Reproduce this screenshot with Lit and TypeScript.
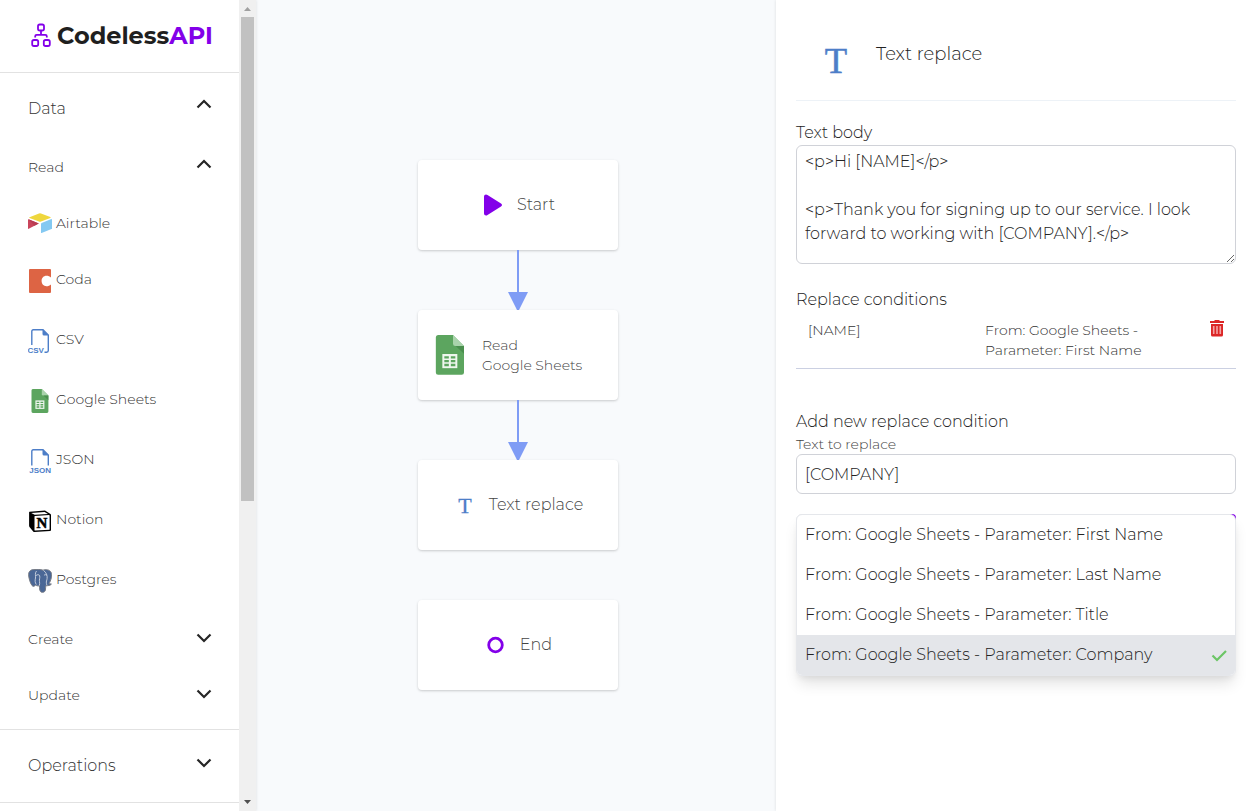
import { LitElement, html, svg, css, nothing } from "lit";
import { customElement, property, state } from "lit/decorators.js";
import { classMap } from "lit/directives/class-map.js";

const sheetsIcon = html`<svg class="glyph" viewBox="0 0 24 24" aria-hidden="true">
  <path d="M4.800 0h9l6.600 6.600v15.900a1.400 1.400 0 0 1-1.400 1.400H4.900a1.400 1.400 0 0 1-1.400-1.400V1.400A1.400 1.400 0 0 1 4.800 0z" fill="#5ca55f" />
  <path d="M13.800 0l6.600 6.600h-5.200a1.400 1.400 0 0 1-1.400-1.400z" fill="#a9d3ab" />
  <path d="M15.400 6.600h5v4.600z" fill="#4a8f4e" />
  <path d="M7.400 11.400h9v8.500h-9z" fill="#eef6ee" />
  <path d="M8.600 12.700h2.700v1.400H8.600zM12.500 12.700h2.700v1.400h-2.700zM8.600 15h2.700v1.400H8.600zM12.500 15h2.700v1.400h-2.700zM8.600 17.300h2.700v1.400H8.600zM12.500 17.300h2.700v1.400h-2.700z" fill="#5ca55f" />
</svg>`;

const textIcon = html`<svg class="glyph" viewBox="0 0 24 24" aria-hidden="true">
  <text x="12" y="19.500" text-anchor="middle" font-family="Liberation Serif, serif" font-size="22" stroke="#4d7ec8" stroke-width=".3" fill="#4d7ec8">T</text>
</svg>`;

const fileIcon = (name: string) => html`<svg class="glyph" viewBox="0 0 24 24" aria-hidden="true">
  ${name === "CSV"
    ? svg`<path d="M3.800 16V2.300Q3.800.8 5.300.8H15L20.300 6V21.500Q20.300 23.200 18.600 23.200H16.500" fill="none" stroke="#4d7ec8" stroke-width="1.400" />
        <text x="-0.500" y="23.500" font-family="Liberation Sans, sans-serif" font-weight="bold" font-size="8" fill="#4d7ec8">CSV</text>`
    : svg`<path d="M3.800 16.500V2.300Q3.800.8 5.300.8H15L20.300 6V16.500" fill="none" stroke="#4d7ec8" stroke-width="1.400" />
        <text x="1.200" y="23.500" font-family="Liberation Sans, sans-serif" font-weight="bold" font-size="8" fill="#4d7ec8">JSON</text>`}
  <path d="M14.500.5v4.500q0 1.500 1.500 1.500h4.800z" fill="#4d7ec8" />
</svg>`;

const icons: Record<string, unknown> = {
  Airtable: html`<svg class="glyph short" viewBox="0 0 24 20" aria-hidden="true">
    <path d="M1.500 4.300L11 .4q1-.4 2 0l9.300 3.700q.8.4 0 .8L13 8.600q-1 .4-2 0L1.500 5q-.8-.4 0-.7z" fill="#efd73d" />
    <path d="M13 10.800q0-.6.6-.9l9.800-3.800q.6-.2.600.4v8.900q0 .5-.5.700L13.600 20q-.6.200-.6-.4z" fill="#84c9f2" />
    <path d="M0 6.700q0-.6.600-.4l10.200 4.200L.700 15.800q-.7.300-.7-.4z" fill="#c9455b" />
    <path d="M10.800 10.500L6.500 12.700.4 6.300z" fill="#b83c52" />
  </svg>`,
  Coda: html`<svg class="glyph" viewBox="0 0 24 24" aria-hidden="true">
    <path d="M2 0h20q1 0 1 1v7.600c-1.200-1.200-2.800-1.800-4.600-1.800-2.700 0-4.800 2.200-4.800 5.200s2.100 5.200 4.800 5.200c1.800 0 3.400-.6 4.600-1.800V23q0 1-1 1H2q-1 0-1-1V1q0-1 1-1z" fill="#dd6444" />
  </svg>`,
  CSV: fileIcon("CSV"),
  "Google Sheets": sheetsIcon,
  JSON: fileIcon("JSON"),
  Notion: html`<svg class="glyph" viewBox="0 0 24 24" aria-hidden="true">
    <path d="M1.500 2.800L17 1.400l5.500 3.500q.5.300.5 1v15q0 1-1 1.100L6.500 23q-.8 0-1.300-.6L1.500 18q-.4-.6-.4-1.200V3.500q0-.6.400-.7z" fill="#000" />
    <path d="M3.200 4.100L16.600 2.900l3.400 2-13.300.9zM6.500 7.400q0-.5.500-.5l14-.8q.6 0 .6.500v13.600q0 .5-.5.500l-14 .8q-.6 0-.6-.5z" fill="#fff" />
    <text x="14" y="18.600" text-anchor="middle" font-family="Liberation Serif, serif" font-weight="bold" font-size="15" stroke="#000" stroke-width=".5">N</text>
  </svg>`,
  Postgres: html`<svg class="glyph" viewBox="0 0 24 24" aria-hidden="true">
    <path d="M7 .6C3.500.1.600 2 .6 5.500c0 3 1.500 8.500 3.400 11 1.400 1.600 2.700.6 3.600-.5 1.200 1 2.400 1 3.800.7.2 2.300.1 4.200 1 5.700 1 1.500 4.600 1.300 5-1.400.3-1.800.2-3.300.5-4.400 2 .4 4.600-.2 5.500-1.500-.9-.3-1.700-.1-2.500-.3C23 11.500 24.500 6 23 3.200 21.500.5 17.600.1 15 1.200 12 .2 9.500.2 7 .6z" fill="#4a6796" stroke="#777b84" stroke-width="1" />
    <path d="M8.300 15.500c-1.500-2-1.300-4-.8-6.500.4-2.500-1-4.500 1-7M8 6.500c1.500-1.200 3.200-1 3.700.3.500 2-.7 4-.2 5.800.4 1.300 0 3-.2 4M15.500 1.500c3 2 4 5.300 3.600 8-.2 2-1.100 3-.7 4.800l.5 2M16 6.300c1-.9 2.300-.7 3 0" fill="none" stroke="#cfd6e2" stroke-width=".9" />
  </svg>`,
};

@customElement("chevron-icon")
class ChevronIcon extends LitElement {
  @property({ type: Boolean }) up = false;
  static styles = css`
    :host { display: flex; }
    .mark { width: 16px; height: 24px; }
  `;
  render() {
    return html`<svg class="mark" viewBox="0 0 16 24" fill="none" stroke="#262626" stroke-width="2.200" aria-hidden="true">
      <path d=${this.up ? "M1.500 12.500L8 6l6.500 6.500" : "M1.500 7.500L8 14l6.500-6.500"} />
    </svg>`;
  }
}

@customElement("side-nav")
class SideNav extends LitElement {
  static styles = css`
    :host {
      display: grid;
      grid-template-columns: minmax(0, 1fr) 17px;
      background: #fff;
      height: 100vh;
      overflow: hidden;
      box-shadow: 0 0 3px rgba(0, 0, 0, 0.12);
    }
    .menu { overflow: hidden; color: #333; }
    .brand {
      display: flex;
      align-items: center;
      gap: 6px;
      height: 72px;
      padding: 0 28px 2px 31px;
      box-sizing: border-box;
      font-size: 24px;
      font-weight: 700;
      color: #1f1f1f;
      text-decoration: none;
    }
    .accent { color: #8300e9; }
    .logo { width: 20px; height: 24px; flex: none; }
    .group { border-top: 1px solid #e2e2e2; }
    .open { padding-bottom: 6px; }
    button {
      display: flex;
      justify-content: space-between;
      align-items: flex-start;
      width: 100%;
      margin: 0;
      border: 0;
      background: none;
      font: inherit;
      color: inherit;
      text-align: left;
      cursor: pointer;
    }
    .section { padding: 22px 27px 16px 28px; font-size: 16px; line-height: 28px; }
    .closed .section { padding-bottom: 22px; }
    .sub { padding: 16px 27px 16px 28px; font-size: 14px; line-height: 24px; }
    .source {
      display: flex;
      align-items: flex-start;
      gap: 4px;
      padding: 18px 28px;
      font-size: 14px;
      line-height: 20px;
      color: inherit;
      text-decoration: none;
    }
    .glyph { width: 24px; height: 24px; flex: none; }
    .short { height: 20px; }
    .track {
      display: flex;
      flex-direction: column;
      align-items: center;
      background: #f0f0f0;
    }
    .arrow { width: 17px; height: 17px; flex: none; }
    .rail { flex: 1; width: 13px; }
    .thumb { height: 62.3%; background: #c1c1c1; }
  `;
  render() {
    return html`
      <nav class="menu">
        <a class="brand" href="#">
          <svg class="logo" viewBox="0 0 20 24" fill="none" stroke="#8300e9" stroke-width="1.800" aria-hidden="true">
            <rect x="7" y="1.500" width="6" height="6" rx="1.800" />
            <rect x="1.200" y="17" width="6" height="6" rx="1.800" />
            <rect x="12.800" y="17" width="6" height="6" rx="1.800" />
            <path d="M10 7.500v4.300M4.200 14.500v-1.200q0-1.500 1.500-1.500h8.600q1.500 0 1.500 1.500v1.200" />
          </svg>
          <span>Codeless<span class="accent">API</span></span>
        </a>
        <div class="group open">
          <button class="section" aria-expanded="true">Data<chevron-icon up></chevron-icon></button>
          <button class="sub" aria-expanded="true">Read<chevron-icon up></chevron-icon></button>
          ${Object.keys(icons).map((name) => html`<a class="source" href="#">${icons[name]}<span>${name}</span></a>`)}
          <button class="sub" aria-expanded="false">Create<chevron-icon></chevron-icon></button>
          <button class="sub" aria-expanded="false">Update<chevron-icon></chevron-icon></button>
        </div>
        <div class="group closed">
          <button class="section" aria-expanded="false">Operations<chevron-icon></chevron-icon></button>
        </div>
        <div class="group"></div>
      </nav>
      <div class="track" aria-hidden="true">
        <svg class="arrow" viewBox="0 0 17 17"><path d="M5 11l3.500-4 3.500 4z" fill="#a0a0a0" /></svg>
        <div class="rail"><div class="thumb"></div></div>
        <svg class="arrow" viewBox="0 0 17 17"><path d="M5 6l3.500 4L12 6z" fill="#505050" /></svg>
      </div>
    `;
  }
}

@customElement("flow-canvas")
class FlowCanvas extends LitElement {
  static styles = css`
    :host {
      display: flex;
      flex-direction: column;
      align-items: center;
      padding: 160px 0 0 4px;
      color: #444;
      font-size: 16px;
      line-height: 24px;
    }
    .card {
      display: flex;
      align-items: center;
      justify-content: center;
      gap: 12px;
      width: 200px;
      height: 90px;
      box-sizing: border-box;
      background: #fff;
      border-radius: 4px;
      box-shadow: 0 1px 3px rgba(0, 0, 0, 0.12), 0 1px 2px rgba(0, 0, 0, 0.08);
    }
    .detail { justify-content: flex-start; padding-left: 12px; font-size: 14px; line-height: 20px; }
    .glyph { width: 24px; height: 24px; flex: none; }
    .detail .glyph { width: 40px; height: 40px; }
    .link { width: 20px; height: 60px; }
    .gap { height: 50px; }
  `;
  private link = html`<svg class="link" viewBox="0 0 20 60" fill="#7f9cf5" aria-hidden="true">
    <path d="M9 0h2v42H9zM0 42h20L11 60H9z" />
  </svg>`;
  render() {
    return html`
      <div class="card">
        <svg class="glyph" viewBox="0 0 24 24" aria-hidden="true"><path d="M3 3.500q0-2 2-2 .8 0 1.500.5l13.500 8.500q2 1.500 0 3L6.500 22q-.7.500-1.500.5-2 0-2-2z" fill="#8300e9" /></svg>
        <span>Start</span>
      </div>
      ${this.link}
      <div class="card detail">${sheetsIcon}<span>Read<br />Google Sheets</span></div>
      ${this.link}
      <div class="card">${textIcon}<span>Text replace</span></div>
      <div class="gap"></div>
      <div class="card">
        <svg class="glyph" viewBox="0 0 24 24" aria-hidden="true"><circle cx="11.500" cy="12" r="6.800" fill="none" stroke="#8300e9" stroke-width="2.800" /></svg>
        <span>End</span>
      </div>
    `;
  }
}

@customElement("replace-panel")
class ReplacePanel extends LitElement {
  @state() private chosen = 3;
  private options = ["First Name", "Last Name", "Title", "Company"].map((p) => `From: Google Sheets - Parameter: ${p}`);
  static styles = css`
    :host {
      display: block;
      padding: 0 20px;
      background: #fff;
      box-shadow: 0 0 3px rgba(0, 0, 0, 0.12);
      color: #222;
      font-size: 16px;
      line-height: 24px;
    }
    header {
      display: flex;
      align-items: flex-start;
      gap: 20px;
      padding: 40px 20px 20px;
      border-bottom: 1px solid #edf2f7;
    }
    h1, h2 { margin: 0; font-weight: inherit; font-size: 16px; line-height: 24px; }
    h1 { font-size: 18px; line-height: 28px; }
    .glyph { width: 40px; height: 40px; flex: none; }
    label, h2 { display: block; }
    .first { padding-top: 20px; }
    textarea, input, select {
      display: block;
      width: 100%;
      box-sizing: border-box;
      margin: 0;
      border: 1px solid #d0d2d8;
      border-radius: 6px;
      background: #fff;
      font: inherit;
      color: inherit;
    }
    textarea { height: 119px; padding: 4px 8px; resize: vertical; }
    input { height: 40px; padding: 0 8px; }
    .conditions { padding-top: 24px; }
    table {
      width: 100%;
      border-collapse: collapse;
      table-layout: fixed;
      font-size: 14px;
      line-height: 20px;
      color: #333;
    }
    td { padding: 8px 12px; vertical-align: top; text-align: left; border-bottom: 1px solid #cbd0e2; }
    .name { width: 153px; }
    .act { width: 30px; }
    .remove { display: flex; margin-left: auto; padding: 0; border: 0; background: none; cursor: pointer; }
    .trash { width: 14px; height: 17px; }
    .add { padding-top: 41px; }
    .small { font-size: 14px; line-height: 20px; color: #444; }
    .picker { position: relative; display: flex; margin-top: 20px; }
    .picker select { flex: 1; width: auto; min-width: 0; height: 40px; border-radius: 6px 0 0 6px; border-color: #e5e7eb; }
    .apply { width: 40px; height: 40px; padding: 0; border: 0; border-radius: 0 4px 4px 0; background: #8300e9; }
    .list {
      position: absolute;
      top: 0;
      left: 0;
      right: 0;
      margin: 0;
      padding: 0;
      list-style: none;
      background: #fff;
      border: 1px solid #e5e7eb;
      border-radius: 6px;
      overflow: hidden;
      box-shadow: 0 10px 15px -3px rgba(0, 0, 0, 0.12), 0 4px 6px -2px rgba(0, 0, 0, 0.06);
    }
    .option {
      display: flex;
      justify-content: space-between;
      align-items: center;
      height: 40px;
      box-sizing: border-box;
      padding: 0 8px 1px;
      cursor: pointer;
    }
    .on { background: #e4e6ea; }
    .tick { width: 16px; height: 16px; }
  `;
  render() {
    return html`
      <header>${textIcon}<h1>Text replace</h1></header>
      <label class="first" for="body">Text body</label>
      <textarea id="body" .value=${"<p>Hi [NAME]</p>\n\n<p>Thank you for signing up to our service. I look forward to working with [COMPANY].</p>"}></textarea>
      <h2 class="conditions">Replace conditions</h2>
      <table>
        <tr>
          <td class="name">[NAME]</td>
          <td>From: Google Sheets - Parameter: First Name</td>
          <td class="act">
            <button class="remove" aria-label="Remove condition">
              <svg class="trash" viewBox="0 0 14 17" aria-hidden="true">
                <path d="M0 1h4.500V0h5v1H14v2H0zM1 4h12v11q0 1.500-1.500 1.500h-9Q1 16.500 1 15z" fill="#dc2626" />
                <path d="M3.700 6v8M7 6v8M10.300 6v8" stroke="#f4a3a3" stroke-width="1.600" />
              </svg>
            </button>
          </td>
        </tr>
      </table>
      <h2 class="add">Add new replace condition</h2>
      <label class="small" for="target">Text to replace</label>
      <input id="target" type="text" .value=${"[COMPANY]"} />
      <div class="picker">
        <select aria-label="Replacement value"></select>
        <button class="apply" aria-label="Toggle values"></button>
        <ul class="list" role="listbox" aria-label="Replacement values">
          ${this.options.map(
            (text, i) => html`<li
              class=${classMap({ option: true, on: i === this.chosen })}
              role="option"
              aria-selected=${i === this.chosen ? "true" : "false"}
              @click=${() => (this.chosen = i)}
            >
              <span>${text}</span>
              ${i === this.chosen
                ? html`<svg class="tick" viewBox="0 0 16 16" aria-hidden="true"><path d="M1.500 8.500l4.500 4.500L15 4" fill="none" stroke="#6cc566" stroke-width="2.200" /></svg>`
                : nothing}
            </li>`
          )}
        </ul>
      </div>
    `;
  }
}

@customElement("app-root")
class AppRoot extends LitElement {
  static styles = css`
    :host {
      display: grid;
      grid-template-columns: 256px minmax(0, 1fr) 480px;
      min-height: 100vh;
      background: #f8fafc;
      font-family: Montserrat, Inter, sans-serif;
      font-weight: 340;
    }
  `;
  render() {
    return html`<side-nav></side-nav><flow-canvas></flow-canvas><replace-panel></replace-panel>`;
  }
}
